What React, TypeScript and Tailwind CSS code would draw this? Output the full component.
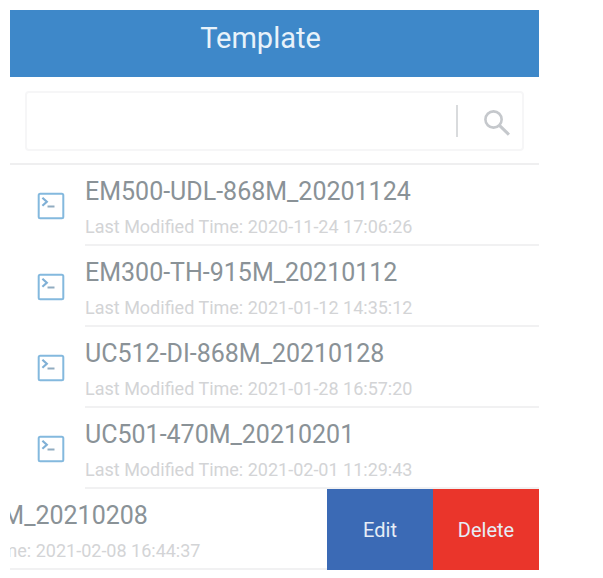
interface Template {
  name: string;
  modified: string;
  swiped?: boolean;
}

const templates: Template[] = [
  { name: 'EM500-UDL-868M_20201124', modified: '2020-11-24 17:06:26' },
  { name: 'EM300-TH-915M_20210112', modified: '2021-01-12 14:35:12' },
  { name: 'UC512-DI-868M_20210128', modified: '2021-01-28 16:57:20' },
  { name: 'UC501-470M_20210201', modified: '2021-02-01 11:29:43' },
  { name: 'AM102-868M_20210208', modified: '2021-02-08 16:44:37', swiped: true },
];

function TemplateIcon() {
  return (
    <svg viewBox="0 0 28 28" className="h-7 w-7 shrink-0" fill="none" aria-hidden="true">
      <rect x="1.7" y="1.7" width="24.6" height="24.6" rx="1.5" stroke="#84b9de" strokeWidth="2" />
      <path d="M5.4 5.8l4.4 4-4.4 4" stroke="#7fb0d6" strokeWidth="2.2" />
      <path d="M10.5 14.5h7" stroke="#91acc1" strokeWidth="2" />
    </svg>
  );
}

function SearchIcon() {
  return (
    <svg viewBox="0 0 24 24" className="h-[26px] w-[26px]" fill="none" stroke="#c5c8cc" aria-hidden="true">
      <circle cx="8.8" cy="8.8" r="7.5" strokeWidth="2.4" />
      <path d="M14 14l9 8.8" strokeWidth="2.8" />
    </svg>
  );
}

function TemplateRow({ template }: { template: Template }) {
  const { name, modified, swiped } = template;

  return (
    <li className="flex overflow-hidden">
      <div className={`flex w-full shrink-0 items-center ${swiped ? '-ml-[212px]' : ''}`}>
        <div className="flex w-[75px] shrink-0 justify-center pl-1.5">
          <TemplateIcon />
        </div>
        <div className="h-[81px] min-w-0 flex-1 border-b-2 border-[#f1f1f2] pt-[9px] whitespace-nowrap">
          <h2 className="text-[25px] leading-9 text-[#8a9297]">{name}</h2>
          <p className="text-[18px] leading-[34px] text-[#d3d4d6]">Last Modified Time: {modified}</p>
        </div>
      </div>
      {swiped && (
        <div className="flex shrink-0 text-xl text-[#e6edf6]">
          <button type="button" className="w-[106px] bg-[#3b6ab5]">
            Edit
          </button>
          <button type="button" className="w-[106px] bg-[#ea352b]">
            Delete
          </button>
        </div>
      )}
    </li>
  );
}

export default function App() {
  return (
    <div className="min-h-screen bg-white pt-2.5 pr-16 pl-2.5 font-['Roboto',sans-serif]">
      <header className="bg-[#3e88c9] pt-[7px] pr-7 pb-[17px]">
        <h1 className="text-center text-[29px] leading-[43px] text-[#e8f2fa]">Template</h1>
      </header>

      {/* Search */}
      <div className="border-b-2 border-[#efeff0] px-[15px] pt-[14px] pb-3">
        <form className="flex h-[60px] items-center rounded border-2 border-[#f6f6f7]" onSubmit={(e) => e.preventDefault()}>
          <input
            type="search"
            aria-label="Search templates"
            className="h-full min-w-0 flex-1 px-3 text-xl text-[#8a9297] outline-none"
          />
          <span className="h-8 w-0.5 bg-[#d9dbdd]" />
          <button type="submit" aria-label="Search" className="flex h-full w-16 items-center justify-center pt-1 pl-3.5">
            <SearchIcon />
          </button>
        </form>
      </div>

      <ul>
        {templates.map((template) => (
          <TemplateRow key={template.name} template={template} />
        ))}
      </ul>
    </div>
  );
}
